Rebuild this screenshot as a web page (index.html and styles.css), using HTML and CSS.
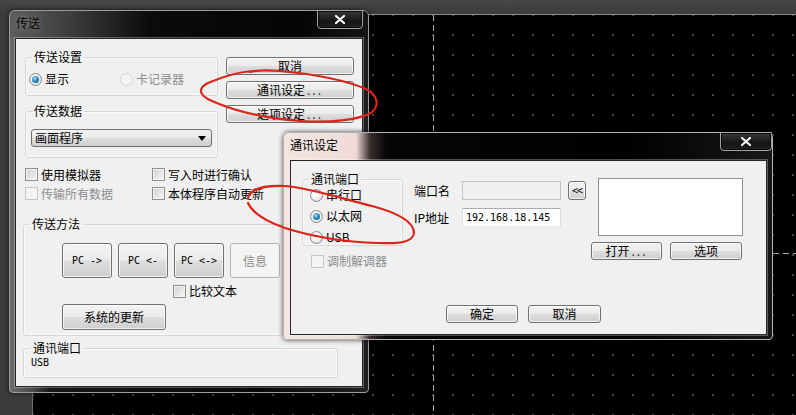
FILE: index.html
```html
<!DOCTYPE html>
<html lang="zh-CN">
<head>
  <meta charset="UTF-8" />
  <title>传送</title>
  <link rel="stylesheet" href="styles.css">
</head>
<body>
  <div class="desktop">
    <div class="strip-top"></div>
    <div class="workarea">
      <div class="strip-left"></div>
      <div class="canvas">
        <div class="guide guide-v"></div>
        <div class="guide guide-h"></div>
      </div>
    </div>

    <!-- 传送 dialog -->
    <div class="window win-transfer">
      <div class="titlebar">
        <span class="title">传送</span>
        <span class="close">
          <svg width="10" height="9" viewBox="0 0 10 9"><path d="M1 1 L9 8 M9 1 L1 8" stroke="#fff" stroke-width="2.2" stroke-linecap="round"/></svg>
        </span>
      </div>
      <div class="client">
        <div class="top-area">
          <div class="left-col">
            <fieldset class="group g-setting">
              <legend>传送设置</legend>
              <div class="radio-row">
                <label class="opt first"><span class="radio on"></span>显示</label>
                <label class="opt dis"><span class="radio"></span>卡记录器</label>
              </div>
            </fieldset>
            <fieldset class="group g-data">
              <legend>传送数据</legend>
              <div class="combo">画面程序<span class="arrow"></span></div>
            </fieldset>
          </div>
          <div class="btn-col">
            <button class="btn">取消</button>
            <button class="btn">通讯设定<span class="dots">...</span></button>
            <button class="btn">选项设定<span class="dots">...</span></button>
          </div>
        </div>

        <div class="check-grid">
          <label class="opt"><span class="check"></span>使用模拟器</label>
          <label class="opt"><span class="check"></span>写入时进行确认</label>
          <label class="opt dis"><span class="check"></span>传输所有数据</label>
          <label class="opt"><span class="check"></span>本体程序自动更新</label>
        </div>

        <fieldset class="group g-method">
          <legend>传送方法</legend>
          <div class="pc-row">
            <button class="btn pc mono">PC -&gt;</button>
            <button class="btn pc mono">PC &lt;-</button>
            <button class="btn pc mono">PC &lt;-&gt;</button>
            <button class="btn pc" disabled>信息</button>
          </div>
          <label class="opt compare"><span class="check"></span>比较文本</label>
          <button class="btn sys">系统的更新</button>
        </fieldset>

        <fieldset class="group g-port">
          <legend>通讯端口</legend>
          <div class="port-value mono">USB</div>
        </fieldset>
      </div>
    </div>

    <!-- 通讯设定 dialog -->
    <div class="window win-comm">
      <div class="titlebar">
        <span class="title">通讯设定</span>
        <span class="close wide">
          <svg width="10" height="9" viewBox="0 0 10 9"><path d="M1 1 L9 8 M9 1 L1 8" stroke="#fff" stroke-width="2.2" stroke-linecap="round"/></svg>
        </span>
      </div>
      <div class="client comm-client">
        <div class="comm-top">
          <div class="comm-left">
            <fieldset class="group g-commport">
              <legend>通讯端口</legend>
              <div class="radio-stack">
                <label class="opt"><span class="radio"></span>串行口</label>
                <label class="opt"><span class="radio on"></span>以太网</label>
                <label class="opt"><span class="radio"></span>USB</label>
              </div>
            </fieldset>
            <label class="opt dis modem"><span class="check"></span>调制解调器</label>
          </div>

          <div class="comm-fields">
            <span class="field-label">端口名</span>
            <span class="input dis"></span>
            <button class="btn tiny">&lt;&lt;</button>
            <span class="field-label">IP地址</span>
            <span class="input mono">192.168.18.145</span>
          </div>

          <div class="comm-list">
            <div class="listbox"></div>
            <div class="list-btns">
              <button class="btn open">打开<span class="dots">...</span></button>
              <button class="btn option">选项</button>
            </div>
          </div>
        </div>

        <div class="comm-footer">
          <button class="btn ok">确定</button>
          <button class="btn cancel">取消</button>
        </div>
      </div>
    </div>

    <!-- hand-drawn red marks -->
    <svg class="marks" width="796" height="415" viewBox="0 0 796 415">
      <path d="M252 71 C240 72 222 77 208 83 C198 88 198 95 212 101 C232 110 262 118 300 121 C330 123 358 120 371 113 C380 106 378 95 366 89 C345 80 312 74 280 71 C268 70 258 70 250 72" />
      <path d="M248 198 C250 190 262 185 285 186 C310 188 340 198 372 206 C398 213 414 222 414 233 C413 242 400 244 378 243 C345 242 310 236 285 228 C265 221 252 212 248 203" />
    </svg>
  </div>
</body>
</html>
```

FILE: styles.css
```css
* {
  box-sizing: border-box;
}

body {
  margin: 0;
  width: 796px;
  height: 415px;
  overflow: hidden;
  background: #3d3d3d;
  font-family: "Noto Sans CJK SC", "Noto Sans", sans-serif;
  font-size: 12px;
  color: #000;
}

.mono {
  font-family: "DejaVu Sans Mono", "Noto Sans CJK SC", monospace;
  font-size: 10px;
}

/* Editor background behind the dialogs */
.desktop {
  position: relative;
  width: 796px;
  height: 415px;
  display: flex;
  flex-direction: column;
}

.strip-top {
  height: 14px;
  background: linear-gradient(#474747, #3b3b3b);
}

.workarea {
  flex: 1;
  display: flex;
}

.strip-left {
  width: 32px;
  background: #3c3c3c;
}

.canvas {
  flex: 1;
  position: relative;
  background-color: #000;
  border-top: 1px solid #8c8c8c;
  border-left: 1px solid #6e6e6e;
  background-image: radial-gradient(circle, #5a5a5a 0.6px, transparent 1.1px);
  background-size: 20px 20px;
  background-position: -10px -10px;
}

.guide {
  position: absolute;
}

.guide-v {
  left: 400px;
  top: 0;
  bottom: 0;
  width: 1px;
  background: repeating-linear-gradient(#a8a8a8 0 6px, transparent 6px 10px);
}

.guide-h {
  top: 238px;
  left: 0;
  right: 0;
  height: 1px;
  background: repeating-linear-gradient(90deg, #a8a8a8 0 6px, transparent 6px 10px);
}

/* Window chrome */
.window {
  position: absolute;
  display: flex;
  flex-direction: column;
  border: 1px solid #9d9d9d;
  border-radius: 6px 6px 4px 4px;
  box-shadow: 0 0 5px rgba(0, 0, 0, 0.7);
}

.titlebar {
  height: 27px;
  display: flex;
  justify-content: space-between;
  align-items: flex-start;
  padding-left: 6px;
  border-radius: 5px 5px 0 0;
}

.title {
  margin-top: 5px;
  line-height: 14px;
  text-shadow: 0 0 6px rgba(255, 255, 255, 0.35);
}

.close {
  margin-top: -1px;
  width: 46px;
  height: 19px;
  display: flex;
  align-items: center;
  justify-content: center;
  border: 1px solid #a4a4a4;
  border-radius: 0 0 4px 4px;
  background: linear-gradient(#3a3a3a, #151515 60%, #222);
  box-shadow: inset 0 0 0 1px rgba(0, 0, 0, 0.8);
}

.client {
  flex: 1;
  background: #f0f0f0;
  border: 1px solid #262626;
  box-shadow: 0 0 0 1px rgba(255, 255, 255, 0.3);
}

.win-transfer {
  left: 9px;
  top: 10px;
  width: 360px;
  height: 383px;
  background: linear-gradient(90deg, #6c6c6c 0, #4a4a4a 22px, #161616 40px, #080808 70%, #202020 100%);
}

.win-transfer .titlebar {
  background: linear-gradient(90deg, #5e5e5e 0, #3d3d3d 60px, #0b0b0b 140px, #050505 80%, #151515 100%);
}

.win-transfer .close {
  margin-right: 5px;
}

.win-transfer .client {
  margin: 0 5px 5px;
  padding: 11px 0 0 9px;
}

/* Group boxes */
.group {
  margin: 0;
  padding: 0 3px;
  border: 1px solid #d7d7d7;
  border-radius: 3px;
  box-shadow: inset 0 0 0 1px #fafafa;
  min-width: 0;
}

.group legend {
  margin-left: 3px;
  padding: 0 2px;
  line-height: 14px;
}

/* Radio buttons and check boxes */
.opt {
  display: flex;
  align-items: center;
  gap: 3px;
  height: 16px;
  line-height: 16px;
  white-space: nowrap;
}

.opt.dis {
  color: #8d8d8d;
}

.radio {
  position: relative;
  width: 13px;
  height: 13px;
  border-radius: 50%;
  border: 1px solid #8a8a8a;
  background: radial-gradient(circle at 45% 40%, #fff 20%, #dadada 90%);
  flex: none;
}

.radio.on::after {
  content: "";
  position: absolute;
  left: 2px;
  top: 2px;
  width: 7px;
  height: 7px;
  border-radius: 50%;
  background: radial-gradient(circle at 40% 35%, #a8e4fb 0, #2b8fc4 45%, #0d4a70 100%);
}

.dis .radio {
  border-color: #d2d2d2;
  background: #f4f4f4;
}

.check {
  width: 13px;
  height: 13px;
  border: 1px solid #8e8f8f;
  background: linear-gradient(135deg, #cfcfcf, #f7f7f7);
  box-shadow: inset 0 0 0 1px #f4f4f4;
  flex: none;
}

.dis .check {
  border-color: #c6c6c6;
  background: #f4f4f4;
}

/* Push buttons */
.btn {
  margin: 0;
  padding: 0;
  height: 18px;
  font: inherit;
  color: #000;
  line-height: 16px;
  border: 1px solid #707070;
  border-radius: 3px;
  background: linear-gradient(#f2f2f2 0%, #ebebeb 48%, #dddddd 52%, #cfcfcf 100%);
  box-shadow: inset 0 0 0 1px rgba(255, 255, 255, 0.7);
}

.btn.mono {
  font-family: "DejaVu Sans Mono", monospace;
  font-size: 10px;
}

.btn[disabled] {
  color: #8a8a8a;
  border-color: #b5b5b5;
  background: #f4f4f4;
  box-shadow: none;
}

.dots {
  letter-spacing: 2px;
  margin-left: 2px;
  color: #333;
}

/* 传送 dialog contents */
.top-area {
  display: flex;
  align-items: flex-start;
}

.left-col {
  width: 193px;
}

.g-setting .radio-row {
  display: flex;
  padding: 7px 0 8px;
}

.g-setting .opt.first {
  width: 91px;
}

.g-data {
  margin-top: 8px;
  padding-bottom: 10px;
}

.combo {
  position: relative;
  margin: 11px 2px 0;
  height: 18px;
  padding-left: 3px;
  line-height: 16px;
  border: 1px solid #707070;
  border-radius: 3px;
  background: linear-gradient(#f2f2f2 0%, #ebebeb 48%, #dddddd 52%, #cfcfcf 100%);
}

.combo .arrow {
  position: absolute;
  right: 5px;
  top: 6px;
  border-left: 4px solid transparent;
  border-right: 4px solid transparent;
  border-top: 5px solid #000;
}

.btn-col {
  margin-left: 8px;
  padding-top: 7px;
  width: 128px;
  display: flex;
  flex-direction: column;
  gap: 6px;
}

.check-grid {
  margin-top: 7px;
  display: grid;
  grid-template-columns: 127px auto;
  grid-auto-rows: 19px;
  align-items: center;
}

.g-method {
  margin: 14px 0 0 -2px;
  width: 315px;
  padding-bottom: 5px;
}

.pc-row {
  display: flex;
  gap: 6px;
  margin: 12px 0 0 35px;
}

.btn.pc {
  width: 50px;
  height: 35px;
}

.compare {
  margin: 5px 0 0 146px;
}

.btn.sys {
  display: block;
  margin: 5px 0 0 35px;
  width: 104px;
  height: 26px;
}

.g-port {
  margin: 5px 0 0 -2px;
  width: 315px;
  padding: 0 3px 8px 7px;
}

.g-port legend {
  margin-left: 0;
}

.port-value {
  margin-top: 2px;
  line-height: 12px;
}

/* 通讯设定 dialog */
.win-comm {
  left: 283px;
  top: 132px;
  width: 490px;
  height: 208px;
  border-color: #b4b4b4;
  background: linear-gradient(90deg, #f4e4e1 0, #efdcd8 72px, #3a3030 86px, #060606 102px, #000 70%, #181818 100%);
}

.win-comm .close {
  width: 52px;
}

.comm-client {
  margin: 0 5px 4px 6px;
  padding: 11px 0 0 11px;
}

.comm-top {
  display: flex;
  align-items: flex-start;
}

.comm-left {
  width: 101px;
}

.g-commport {
  padding: 1px 3px 0;
}

.radio-stack {
  display: flex;
  flex-direction: column;
  gap: 5px;
  margin-left: 4px;
}

.modem {
  margin: 7px 0 0 9px;
}

.comm-fields {
  margin-left: 11px;
  padding-top: 9px;
  display: grid;
  grid-template-columns: 48px 99px 25px;
  grid-auto-rows: 19px;
  row-gap: 8px;
  align-items: center;
}

.input {
  height: 19px;
  padding-left: 3px;
  line-height: 17px;
  border: 1px solid #abadb3;
  border-color: #abadb3 #dbdfe6 #e3e9ef #e2e3ea;
  background: #fff;
}

.input.dis {
  border-color: #c2c2c2;
  background: #f0f0f0;
}

.btn.tiny {
  margin-left: 7px;
  width: 18px;
  height: 19px;
  font-family: "DejaVu Sans Mono", monospace;
  font-size: 10px;
  letter-spacing: -1px;
}

.comm-list {
  margin-left: 5px;
  padding-top: 6px;
  width: 152px;
}

.listbox {
  margin-left: 7px;
  width: 145px;
  height: 58px;
  border: 1px solid #8f8f8f;
  background: #fff;
}

.list-btns {
  display: flex;
  gap: 8px;
  margin-top: 6px;
}

.btn.open {
  width: 71px;
}

.btn.option {
  width: 72px;
}

.comm-footer {
  display: flex;
  gap: 10px;
  margin-top: 36px;
  padding-left: 144px;
}

.btn.ok {
  width: 72px;
}

.btn.cancel {
  width: 73px;
}

/* Red annotation strokes over everything */
.marks {
  position: absolute;
  left: 0;
  top: 0;
  pointer-events: none;
}

.marks path {
  fill: none;
  stroke: #dc2418;
  stroke-width: 2.2;
  stroke-linecap: round;
}
```
